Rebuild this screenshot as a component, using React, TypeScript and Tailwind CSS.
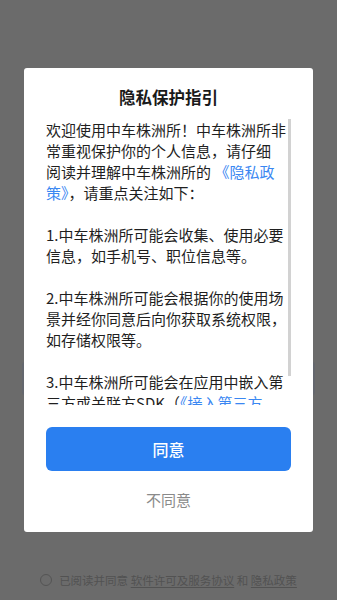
import React from 'react';

const font = { fontFamily: '"Noto Sans CJK SC", "Noto Sans", sans-serif' };

const Link = ({ children }: { children: React.ReactNode }) => (
    <span className="text-[#3a87f2]">{children}</span>
);

export default function App() {
    return (
        <div className="relative w-full h-[600px] overflow-hidden bg-[#6b6b6b]" style={font}>
            {/* Page behind the overlay */}
            <div className="flex flex-col pt-[362px]">
                <div className="mx-[22px] h-[33px] rounded-[3px] bg-[#64676e]" />
                <div className="mt-[177px] flex items-center justify-center gap-[7px] h-[16px] text-[11.5px] leading-[16px] text-[#525252]">
                    <span className="w-[12px] h-[12px] rounded-full border border-[#545454]" />
                    <span>
                        已阅读并同意 <span className="underline underline-offset-2">软件许可及服务协议</span> 和 <span className="underline underline-offset-2">隐私政策</span>
                    </span>
                </div>
            </div>

            {/* Privacy dialog */}
            <div className="absolute inset-0 flex justify-center items-start pt-[68px]">
                <div className="w-[289px] bg-white rounded-[3px] flex flex-col pt-[17px] pb-[21px]">
                    <h1 className="text-center text-[16.5px] leading-[24px] font-semibold text-[#1a1a1a]">隐私保护指引</h1>

                    <div className="mt-[10px] h-[286px] flex pl-[22px] pr-[22px] overflow-hidden">
                        <div className="flex-1 overflow-hidden text-[15px] leading-[21px] text-[#1f1f1f] whitespace-nowrap">
                            <p>欢迎使用中车株洲所！中车株洲所非</p>
                            <p>常重视保护你的个人信息，请仔细</p>
                            <p>阅读并理解中车株洲所的 <Link>《隐私政</Link></p>
                            <p><Link>策》</Link>，请重点关注如下：</p>
                            <p>&nbsp;</p>
                            <p>1.中车株洲所可能会收集、使用必要</p>
                            <p>信息，如手机号、职位信息等。</p>
                            <p>&nbsp;</p>
                            <p>2.中车株洲所可能会根据你的使用场</p>
                            <p>景并经你同意后向你获取系统权限，</p>
                            <p>如存储权限等。</p>
                            <p>&nbsp;</p>
                            <p>3.中车株洲所可能会在应用中嵌入第</p>
                            <p>三方或关联方SDK（<Link>《接入第三方</Link></p>
                            <p><Link>SDK清单》</Link>），用于实现相关功能。</p>
                        </div>
                        <div className="w-[3px] h-[257px] shrink-0 bg-[#d2d2d2]" />
                    </div>

                    <button className="mt-[22px] mx-[22px] h-[44px] rounded-[6px] bg-[#2a7ff0] text-white text-[16px] font-medium">
                        同意
                    </button>
                    <button className="mt-[18px] h-[22px] text-[15px] leading-[22px] text-[#8a8a8a]">
                        不同意
                    </button>
                </div>
            </div>
        </div>
    );
}
